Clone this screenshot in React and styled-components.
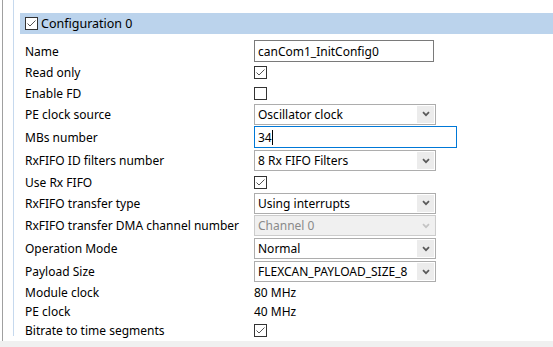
import styled, { createGlobalStyle } from 'styled-components'

const GlobalStyle = createGlobalStyle`
  html, body {
    margin: 0;
    padding: 0;
    background: #ffffff;
  }
  body {
    font-family: "Noto Sans", "Open Sans", sans-serif;
    font-size: 12px;
    color: #000000;
  }
`

const Page = styled.div`
  width: 553px;
  height: 347px;
  display: flex;
  flex-direction: column;
  overflow: hidden;
`

const Main = styled.div`
  flex: 1;
  margin-left: 2px;
  border-left: 1px solid #a0a0a0;
  padding-left: 10px;
  display: flex;
  flex-direction: column;
`

const Tree = styled.div`
  border-left: 1px solid #c6d9ee;
  padding: 13px 0 0 6px;
  height: 323px;
`

const Header = styled.div`
  height: 21px;
  background: #bbd3ec;
  display: flex;
  align-items: center;
  gap: 3px;
  padding-left: 5px;
  font-size: 12.5px;
`

const Rows = styled.div`
  margin-top: 6px;
  display: flex;
  flex-direction: column;
`

const Row = styled.div`
  height: ${(p) => p.h}px;
  display: grid;
  grid-template-columns: 229px 1fr;
  align-items: center;
  padding-left: 5px;
`

const Label = styled.span`
  white-space: nowrap;
`

const TextBox = styled.div`
  box-sizing: border-box;
  width: ${(p) => p.w}px;
  height: 22px;
  border: 1px solid ${(p) => (p.focused ? '#0078d7' : '#7a7a7a')};
  display: flex;
  align-items: center;
  padding-left: 3px;
`

const Caret = styled.span`
  display: inline-block;
  width: 1px;
  height: 15px;
  background: #000;
`

const SelectBox = styled.div`
  box-sizing: border-box;
  width: 182px;
  height: 21px;
  border: 1px solid ${(p) => (p.disabled ? '#cccccc' : '#adadad')};
  background: ${(p) => (p.disabled ? '#f0f0f0' : '#ffffff')};
  color: ${(p) => (p.disabled ? '#8a8a8a' : '#000000')};
  display: flex;
  align-items: center;
  padding: 1px 1px 1px 3px;
`

const SelectText = styled.span`
  flex: 1;
  white-space: nowrap;
  overflow: hidden;
`

const ArrowBox = styled.span`
  width: 17px;
  align-self: stretch;
  background: ${(p) => (p.disabled ? '#f0f0f0' : '#ececec')};
  display: flex;
  align-items: center;
  justify-content: center;
`

const Value = styled.span`
  white-space: nowrap;
`

const Check = ({ checked }) => (
  <svg width="13" height="13" viewBox="0 0 13 13" style={{ display: 'block' }}>
    <rect x="0.5" y="0.5" width="12" height="12" fill="#fff" stroke="#333" />
    {checked && (
      <polyline points="2.5,6.5 5,9 10.5,3.5" fill="none" stroke="#555" strokeWidth="1" />
    )}
  </svg>
)

const Select = ({ value, disabled }) => (
  <SelectBox disabled={disabled}>
    <SelectText>{value}</SelectText>
    <ArrowBox disabled={disabled}>
      <svg width="8" height="6" viewBox="0 0 8 6">
        <path
          d="M1 1.2 L4 4.2 L7 1.2"
          fill="none"
          stroke={disabled ? '#c4c4c4' : '#5a5a5a'}
          strokeWidth="1.7"
        />
      </svg>
    </ArrowBox>
  </SelectBox>
)

const rows = [
  { label: 'Name', h: 22, ctrl: <TextBox w={180}>canCom1_InitConfig0</TextBox> },
  { label: 'Read only', h: 21, ctrl: <Check checked /> },
  { label: 'Enable FD', h: 20, ctrl: <Check /> },
  { label: 'PE clock source', h: 22, ctrl: <Select value="Oscillator clock" /> },
  {
    label: 'MBs number',
    h: 24,
    ctrl: (
      <TextBox w={203} focused>
        34<Caret />
      </TextBox>
    ),
  },
  { label: 'RxFIFO ID filters number', h: 23, ctrl: <Select value="8 Rx FIFO Filters" /> },
  { label: 'Use Rx FIFO', h: 20, ctrl: <Check checked /> },
  { label: 'RxFIFO transfer type', h: 22, ctrl: <Select value="Using interrupts" /> },
  { label: 'RxFIFO transfer DMA channel number', h: 23, ctrl: <Select value="Channel 0" disabled /> },
  { label: 'Operation Mode', h: 23, ctrl: <Select value="Normal" /> },
  { label: 'Payload Size', h: 23, ctrl: <Select value="FLEXCAN_PAYLOAD_SIZE_8" /> },
  { label: 'Module clock', h: 19, ctrl: <Value>80 MHz</Value> },
  { label: 'PE clock', h: 19, ctrl: <Value>40 MHz</Value> },
  { label: 'Bitrate to time segments', h: 19, ctrl: <Check checked /> },
]

const Footer = styled.div`
  height: 6px;
  background: #f0f0f0;
`

export default function App() {
  return (
    <Page>
      <GlobalStyle />
      <Main>
        <Tree>
          <Header>
            <Check checked />
            <span>Configuration 0</span>
          </Header>
          <Rows>
            {rows.map((r) => (
              <Row key={r.label} h={r.h}>
                <Label>{r.label}</Label>
                <div>{r.ctrl}</div>
              </Row>
            ))}
          </Rows>
        </Tree>
      </Main>
      <Footer />
    </Page>
  )
}
